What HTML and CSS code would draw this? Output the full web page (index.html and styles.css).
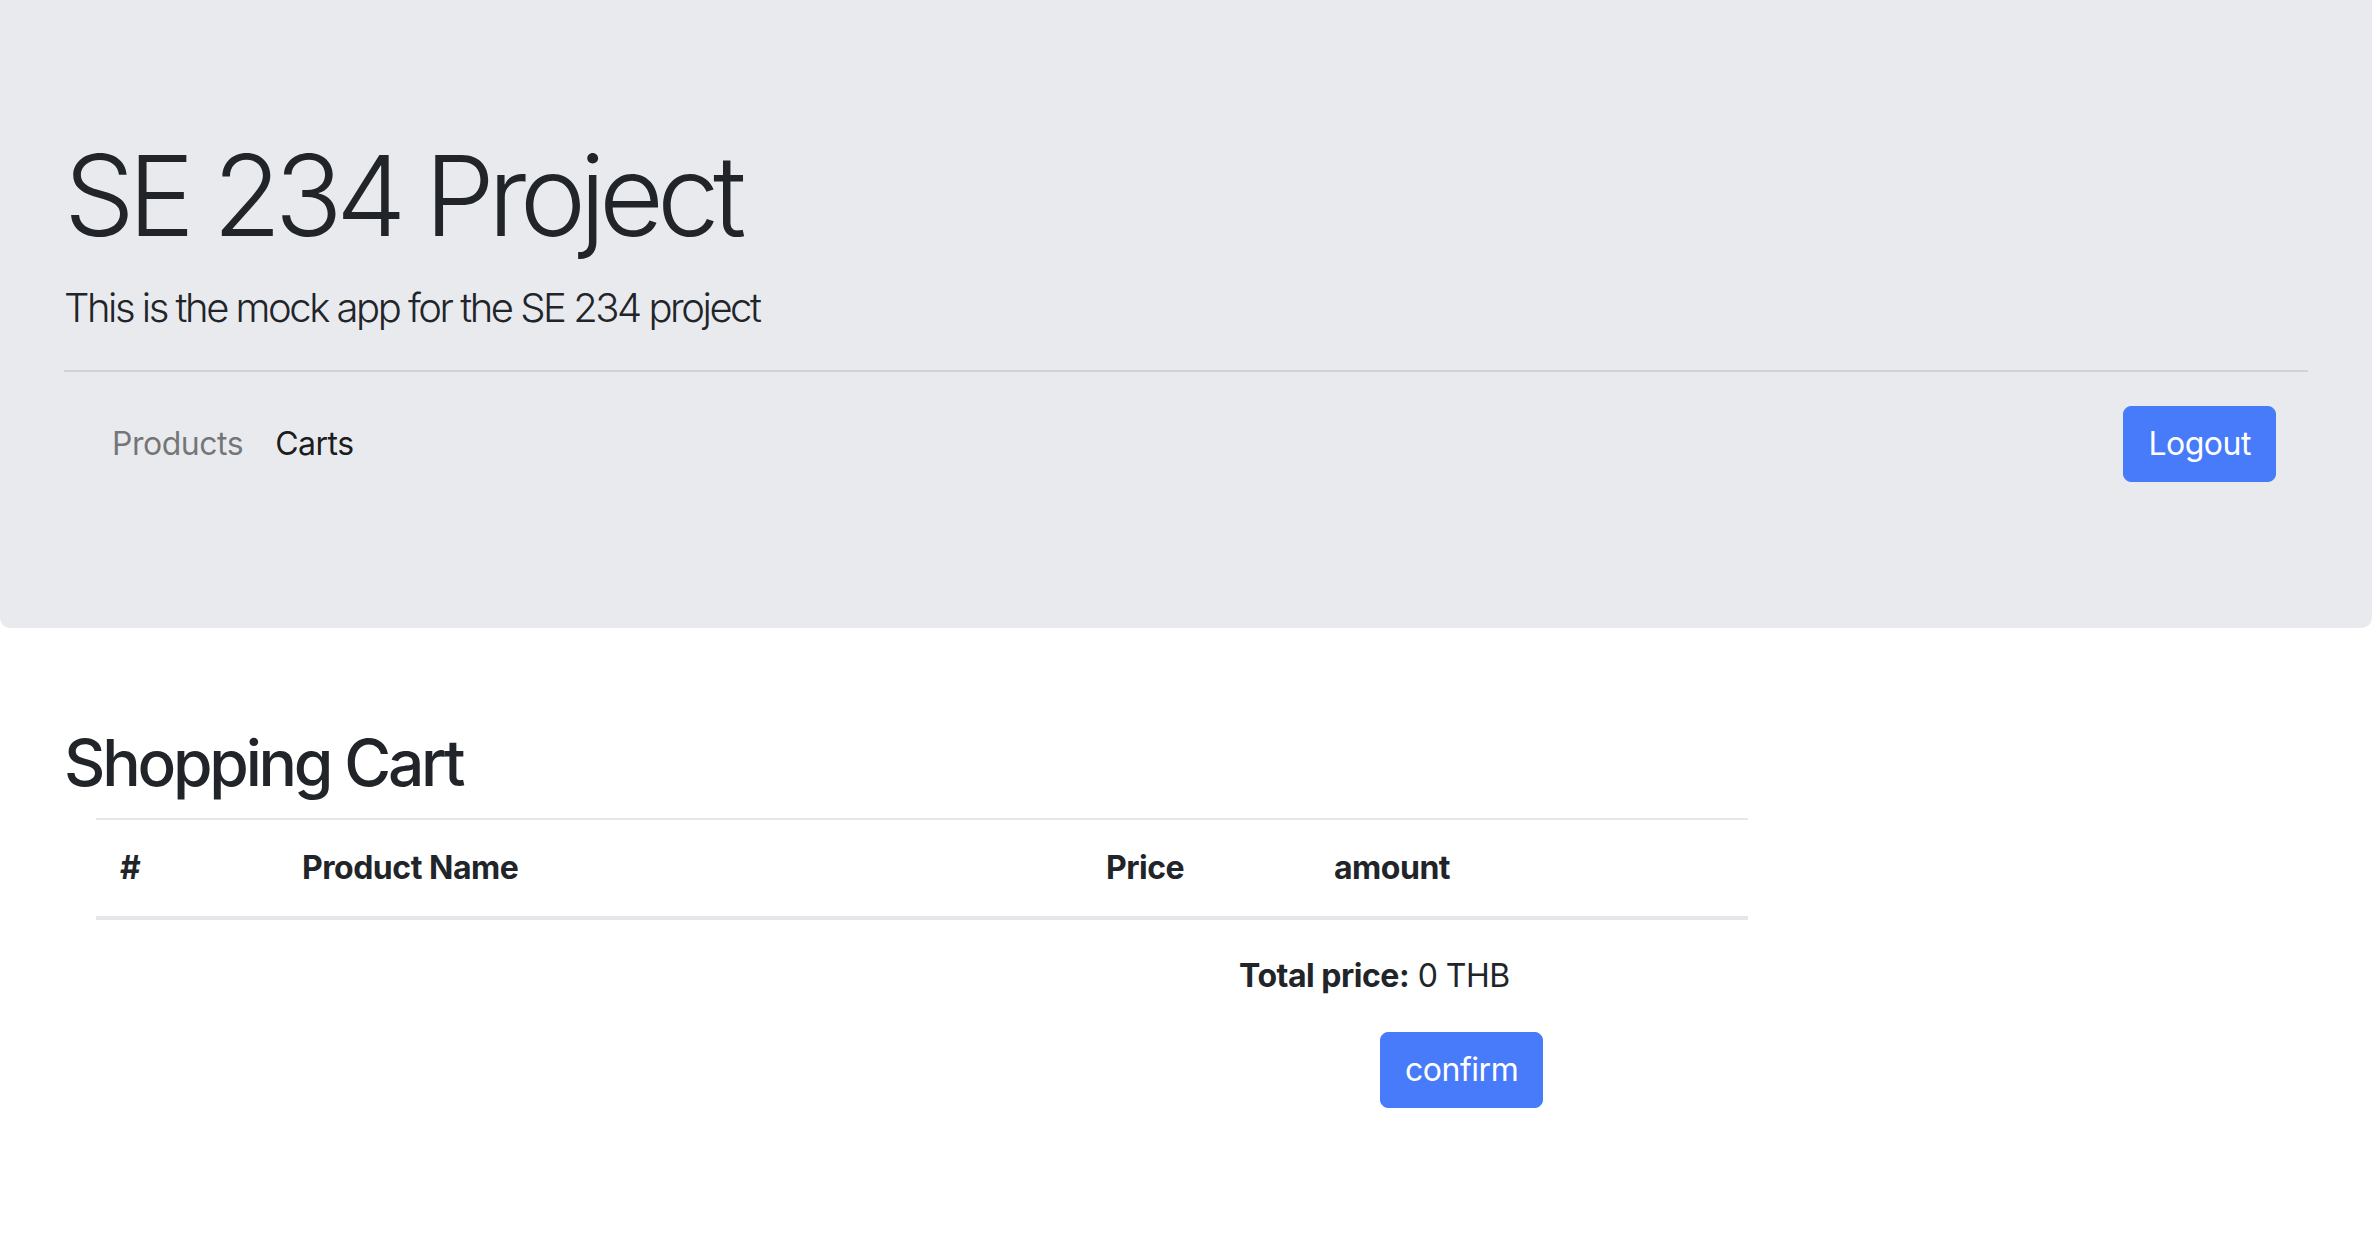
FILE: index.html
```html
<!DOCTYPE html>
<html lang="en">
<head>
<meta charset="utf-8">
<title>SE 234 Project</title>
<link rel="stylesheet" href="styles.css">
</head>
<body>
<header class="jumbotron">
  <h1 class="display">SE 234 Project</h1>
  <p class="lead">This is the mock app for the SE 234 project</p>
  <hr class="divider">
  <nav class="navbar">
    <ul class="nav-links">
      <li><a class="nav-link" href="#">Products</a></li>
      <li><a class="nav-link active" href="#">Carts</a></li>
    </ul>
    <button class="btn btn-primary" type="button">Logout</button>
  </nav>
</header>
<main class="content">
  <h2 class="section-title">Shopping Cart</h2>
  <table class="cart-table">
    <thead>
      <tr>
        <th class="col-num">#</th>
        <th class="col-name">Product Name</th>
        <th class="col-price">Price</th>
        <th class="col-amount">amount</th>
      </tr>
    </thead>
    <tbody></tbody>
  </table>
  <div class="summary">
    <p class="total"><strong>Total price:</strong> 0 THB</p>
    <button class="btn btn-primary btn-confirm" type="button">confirm</button>
  </div>
</main>
</body>
</html>
```

FILE: styles.css
```css
* { box-sizing: border-box; }

html { font-size: 32px; }

body {
  margin: 0;
  font-family: Inter, "Noto Sans", "Liberation Sans", sans-serif;
  font-size: 32px;
  line-height: 1.5;
  letter-spacing: -0.015em;
  color: #212529;
  background: #ffffff;
}

.jumbotron {
  background: #e9eaee;
  padding: 128px 64px;
  border-radius: 0 0 10px 10px;
}

.display {
  margin: 0 0 16px;
  font-size: 112px;
  font-weight: 300;
  line-height: 1.2;
  letter-spacing: -0.06em;
}

.lead {
  margin: 0 0 32px;
  font-size: 40px;
  font-weight: 300;
  line-height: 1.5;
  letter-spacing: -0.062em;
}

.divider {
  margin: 0 0 16px;
  border: 0;
  border-top: 2px solid rgba(0, 0, 0, 0.1);
}

.navbar {
  display: flex;
  align-items: center;
  justify-content: space-between;
  padding: 16px 32px;
}

.nav-links {
  display: flex;
  list-style: none;
  margin: 0;
  padding: 0;
}

.nav-link {
  display: block;
  padding: 16px;
  color: rgba(0, 0, 0, 0.5);
  text-decoration: none;
  line-height: 1.5;
}

.nav-link.active { color: rgba(0, 0, 0, 0.9); }

.btn {
  font-family: inherit;
  font-size: 32px;
  line-height: 48px;
  letter-spacing: -0.015em;
  padding: 13px 24px;
  border: 1px solid transparent;
  border-radius: 8px;
  cursor: pointer;
}

.btn-primary {
  background: #477bfa;
  border-color: #477bfa;
  color: #ffffff;
}

.content {
  padding: 97px 64px 64px;
}

.section-title {
  margin: 0 0 16px;
  font-size: 64px;
  font-weight: 500;
  line-height: 1.2;
  letter-spacing: -0.05em;
}

.cart-table {
  margin: 0 0 32px 32px;
  width: 1652px;
  border-collapse: collapse;
}

.cart-table th {
  padding: 24px;
  text-align: left;
  font-weight: 700;
  line-height: 48px;
  border-top: 2px solid #e6e7eb;
  border-bottom: 4px solid #e6e7eb;
}

.col-num { width: 182px; }
.col-name { width: 804px; }
.col-price { width: 228px; }
.col-amount { width: 438px; }

.summary {
  display: flex;
  flex-direction: column;
  align-items: flex-start;
}

.total {
  margin: 0 0 32px 1175px;
  line-height: 48px;
}

.total strong { font-weight: 700; }

.btn-confirm {
  margin-left: 1316px;
}
```
